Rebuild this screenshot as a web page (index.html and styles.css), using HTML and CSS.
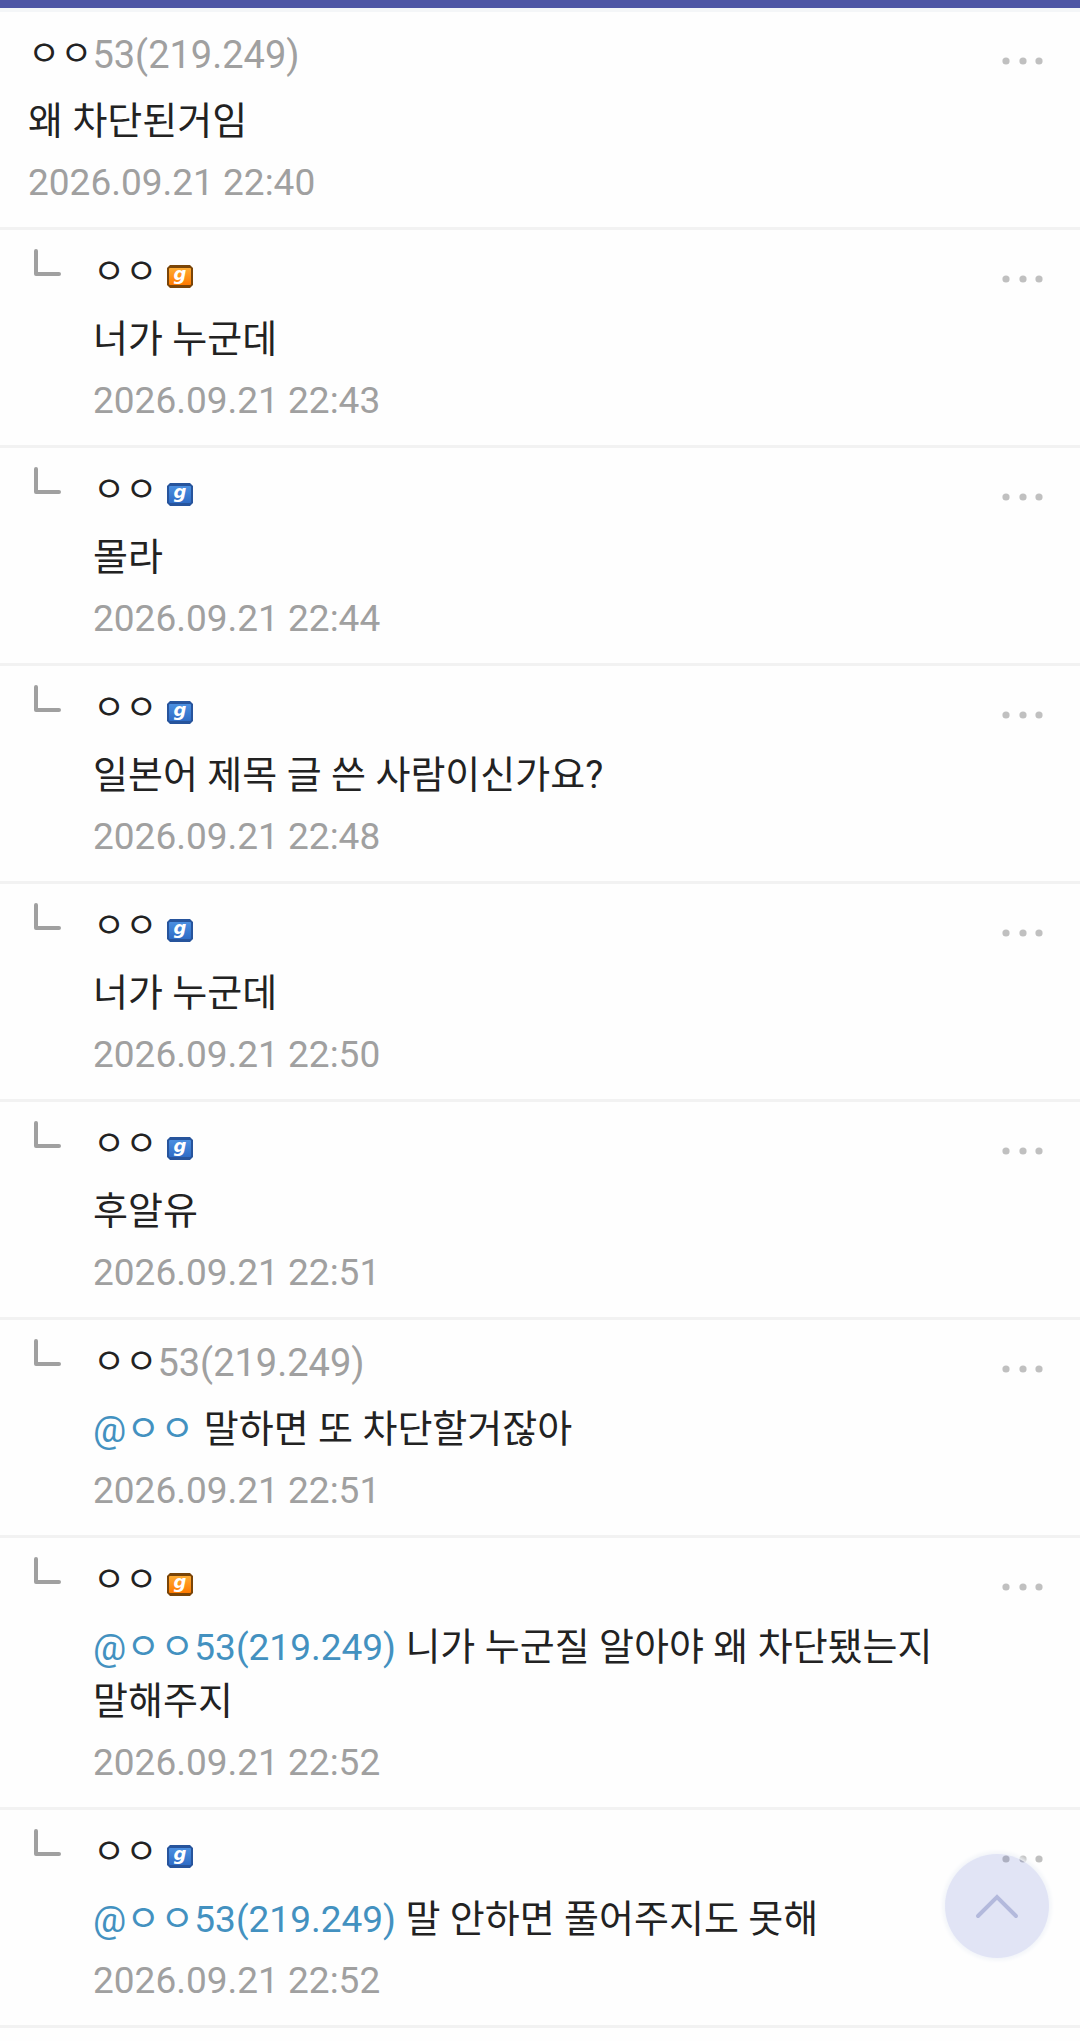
FILE: index.html
```
<!DOCTYPE html>
<html lang="ko">
<head>
<meta charset="utf-8">
<meta name="viewport" content="width=device-width, initial-scale=1">
<title>댓글</title>
<link rel="stylesheet" href="styles.css">
</head>
<body>
<svg class="defs" aria-hidden="true">
  <defs>
    <linearGradient id="fill-orange" x1="0" y1="0" x2="0" y2="1"><stop offset="0" stop-color="#ffac33"/><stop offset="1" stop-color="#ff7a00"/></linearGradient>
    <linearGradient id="fill-blue" x1="0" y1="0" x2="0" y2="1"><stop offset="0" stop-color="#4b8fe0"/><stop offset="1" stop-color="#2f6cc6"/></linearGradient>
    <symbol id="orange" viewBox="0 0 26 23">
      <path d="M3 0H23L26 3V20L23 23H3L0 20V3Z" fill="#7a4508"/>
      <rect x="2" y="3" width="22" height="17" rx="1" fill="url(#fill-orange)"/>
      <text x="13" y="15" class="badge-letter">g</text>
    </symbol>
    <symbol id="blue" viewBox="0 0 26 23">
      <path d="M3 0H23L26 3V20L23 23H3L0 20V3Z" fill="#27549c"/>
      <rect x="2" y="3" width="22" height="17" rx="1" fill="url(#fill-blue)"/>
      <text x="13" y="15" class="badge-letter">g</text>
    </symbol>
    <symbol id="dots" viewBox="0 0 42 8">
      <circle cx="4" cy="4" r="3.6"/><circle cx="21" cy="4" r="3.6"/><circle cx="37" cy="4" r="3.6"/>
    </symbol>
    <symbol id="corner" viewBox="0 0 28 28">
      <path d="M2 2V25H25" fill="none" stroke="#a0a0a0" stroke-width="4" stroke-linecap="round" stroke-linejoin="round"/>
    </symbol>
  </defs>
</svg>
<header class="topbar"></header>
<main>
<ul class="comments">
  <li class="comment">
    <div class="content">
      <p class="author">ㅇㅇ<span class="ip">53(219.249)</span></p>
      <p class="text">왜 차단된거임</p>
      <time class="date">2026.09.21 22:40</time>
    </div>
    <button class="more" aria-label="더보기"><svg><use href="#dots"/></svg></button>
  </li>
  <li class="comment reply">
    <svg class="corner"><use href="#corner"/></svg>
    <div class="content">
      <p class="author">ㅇㅇ<svg class="badge"><use href="#orange"/></svg></p>
      <p class="text">너가 누군데</p>
      <time class="date">2026.09.21 22:43</time>
    </div>
    <button class="more" aria-label="더보기"><svg><use href="#dots"/></svg></button>
  </li>
  <li class="comment reply">
    <svg class="corner"><use href="#corner"/></svg>
    <div class="content">
      <p class="author">ㅇㅇ<svg class="badge"><use href="#blue"/></svg></p>
      <p class="text">몰라</p>
      <time class="date">2026.09.21 22:44</time>
    </div>
    <button class="more" aria-label="더보기"><svg><use href="#dots"/></svg></button>
  </li>
  <li class="comment reply">
    <svg class="corner"><use href="#corner"/></svg>
    <div class="content">
      <p class="author">ㅇㅇ<svg class="badge"><use href="#blue"/></svg></p>
      <p class="text">일본어 제목 글 쓴 사람이신가요?</p>
      <time class="date">2026.09.21 22:48</time>
    </div>
    <button class="more" aria-label="더보기"><svg><use href="#dots"/></svg></button>
  </li>
  <li class="comment reply">
    <svg class="corner"><use href="#corner"/></svg>
    <div class="content">
      <p class="author">ㅇㅇ<svg class="badge"><use href="#blue"/></svg></p>
      <p class="text">너가 누군데</p>
      <time class="date">2026.09.21 22:50</time>
    </div>
    <button class="more" aria-label="더보기"><svg><use href="#dots"/></svg></button>
  </li>
  <li class="comment reply">
    <svg class="corner"><use href="#corner"/></svg>
    <div class="content">
      <p class="author">ㅇㅇ<svg class="badge"><use href="#blue"/></svg></p>
      <p class="text">후알유</p>
      <time class="date">2026.09.21 22:51</time>
    </div>
    <button class="more" aria-label="더보기"><svg><use href="#dots"/></svg></button>
  </li>
  <li class="comment reply">
    <svg class="corner"><use href="#corner"/></svg>
    <div class="content">
      <p class="author">ㅇㅇ<span class="ip">53(219.249)</span></p>
      <p class="text"><a class="mention" href="#">@ㅇㅇ</a> 말하면 또 차단할거잖아</p>
      <time class="date">2026.09.21 22:51</time>
    </div>
    <button class="more" aria-label="더보기"><svg><use href="#dots"/></svg></button>
  </li>
  <li class="comment reply">
    <svg class="corner"><use href="#corner"/></svg>
    <div class="content">
      <p class="author">ㅇㅇ<svg class="badge"><use href="#orange"/></svg></p>
      <p class="text"><a class="mention" href="#">@ㅇㅇ53(219.249)</a> 니가 누군질 알아야 왜 차단됐는지 말해주지</p>
      <time class="date">2026.09.21 22:52</time>
    </div>
    <button class="more" aria-label="더보기"><svg><use href="#dots"/></svg></button>
  </li>
  <li class="comment reply">
    <svg class="corner"><use href="#corner"/></svg>
    <div class="content">
      <p class="author">ㅇㅇ<svg class="badge"><use href="#blue"/></svg></p>
      <p class="text"><a class="mention" href="#">@ㅇㅇ53(219.249)</a> 말 안하면 풀어주지도 못해</p>
      <time class="date">2026.09.21 22:52</time>
    </div>
    <button class="more" aria-label="더보기"><svg><use href="#dots"/></svg></button>
  </li>
</ul>
</main>
<button class="to-top" aria-label="맨 위로">
  <svg viewBox="0 0 44 26" width="44" height="26"><path d="M3 23L22 4L41 23" fill="none" stroke="#b3b9dc" stroke-width="4" stroke-linecap="round"/></svg>
</button>
</body>
</html>
```
FILE: styles.css
```
* { box-sizing: border-box; }

body {
  margin: 0;
  background: #fefefe;
  color: #222;
  font-family: Roboto, "Noto Sans CJK KR", sans-serif;
}

.defs { display: block; width: 0; height: 0; }

.topbar {
  height: 12px;
  background: #4e56a5;
  border-bottom: 4px solid #f4f6f8;
}

.comments { margin: 0; padding: 0; list-style: none; }

.comment {
  display: flex;
  align-items: flex-start;
  padding: 18px 28px 20px;
  border-bottom: 3px solid #f2f2f2;
}

.content { flex: 1; min-width: 0; }

.corner {
  width: 28px;
  height: 28px;
  margin: 1px 31px 0 6px;
  flex: none;
}

.author, .text { margin: 0; }

.author {
  display: flex;
  align-items: center;
  height: 50px;
  font-size: 35px;
  line-height: 50px;
}

.ip { color: #a0a0a0; font-size: 38px; }

.badge { width: 26px; height: 23px; margin: 6px 0 0 10px; }

.badge-letter {
  font: italic bold 18px "DejaVu Sans", sans-serif;
  fill: #fff;
  text-anchor: middle;
}

.text {
  margin-top: 14px;
  font-size: 38px;
  line-height: 54px;
  word-break: keep-all;
}

.mention {
  color: #4391c0;
  font-size: 37px;
  line-height: 1;
  text-decoration: none;
}

.date {
  display: block;
  margin-top: 11px;
  color: #a0a0a0;
  font-size: 37px;
  line-height: 48px;
}

.more {
  display: flex;
  padding: 27px 8px;
  border: 0;
  background: none;
}

.more svg { width: 42px; height: 8px; fill: #c0c0c0; }

.to-top {
  position: fixed;
  right: 31px;
  bottom: 83px;
  display: flex;
  align-items: center;
  justify-content: center;
  width: 104px;
  height: 104px;
  padding: 0;
  border: 0;
  border-radius: 50%;
  background: rgba(75, 95, 200, 0.16);
  box-shadow: 0 0 4px 2px #f0f3f8;
}
```
